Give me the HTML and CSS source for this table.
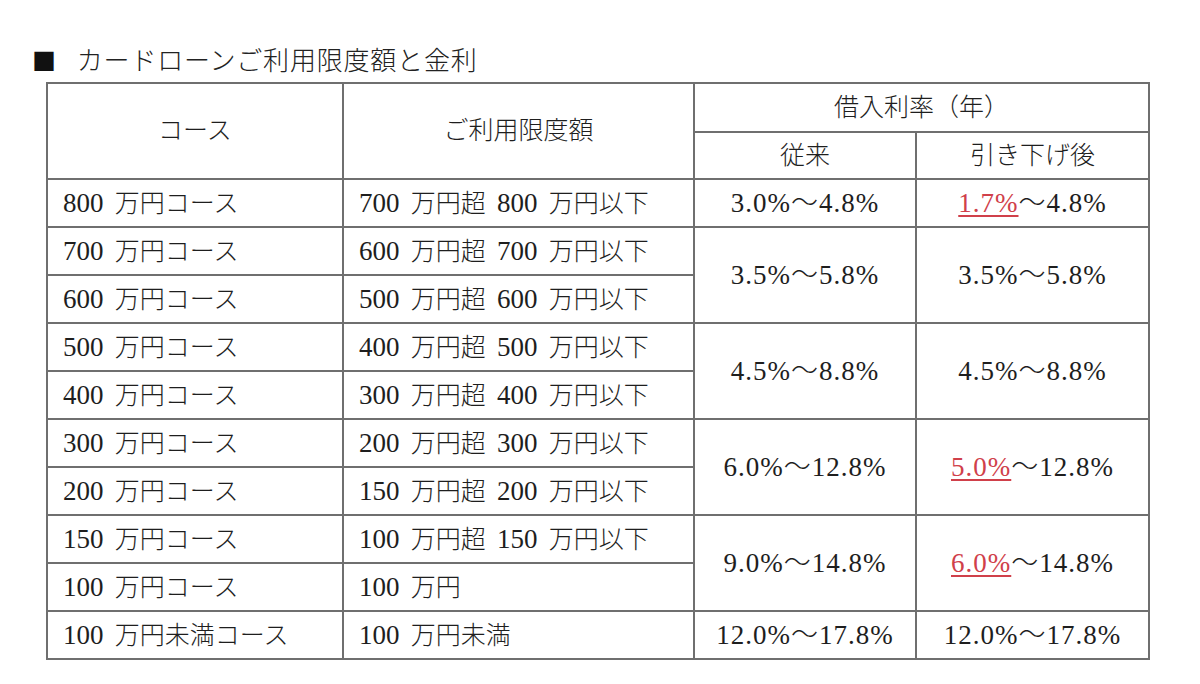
FILE: index.html
```html
<!DOCTYPE html>
<html lang="ja">
<head>
<meta charset="utf-8">
<link rel="stylesheet" href="styles.css">
</head>
<body>
<div class="page">
  <h1 class="title"><span class="mark">■</span>カードローンご利用限度額と金利</h1>
  <table class="rates">
    <colgroup>
      <col class="c1"><col class="c2"><col class="c3"><col class="c4">
    </colgroup>
    <thead>
      <tr class="h1">
        <th rowspan="2">コース</th>
        <th rowspan="2" class="top">ご利用限度額</th>
        <th colspan="2">借入利率（年）</th>
      </tr>
      <tr class="h2">
        <th>従来</th>
        <th>引き下げ後</th>
      </tr>
    </thead>
    <tbody>
      <tr>
        <td><span class="n">800</span> 万円コース</td><td><span class="n">700</span> 万円超 <span class="n">800</span> 万円以下</td>
        <td class="rate"><span class="r">3.0%～4.8%</span></td><td class="rate"><span class="r"><span class="new">1.7%</span>～4.8%</span></td>
      </tr>
      <tr>
        <td><span class="n">700</span> 万円コース</td><td><span class="n">600</span> 万円超 <span class="n">700</span> 万円以下</td>
        <td class="rate" rowspan="2"><span class="r">3.5%～5.8%</span></td><td class="rate" rowspan="2"><span class="r">3.5%～5.8%</span></td>
      </tr>
      <tr>
        <td><span class="n">600</span> 万円コース</td><td><span class="n">500</span> 万円超 <span class="n">600</span> 万円以下</td>
      </tr>
      <tr>
        <td><span class="n">500</span> 万円コース</td><td><span class="n">400</span> 万円超 <span class="n">500</span> 万円以下</td>
        <td class="rate" rowspan="2"><span class="r">4.5%～8.8%</span></td><td class="rate" rowspan="2"><span class="r">4.5%～8.8%</span></td>
      </tr>
      <tr>
        <td><span class="n">400</span> 万円コース</td><td><span class="n">300</span> 万円超 <span class="n">400</span> 万円以下</td>
      </tr>
      <tr>
        <td><span class="n">300</span> 万円コース</td><td><span class="n">200</span> 万円超 <span class="n">300</span> 万円以下</td>
        <td class="rate" rowspan="2"><span class="r">6.0%～12.8%</span></td><td class="rate" rowspan="2"><span class="r"><span class="new">5.0%</span>～12.8%</span></td>
      </tr>
      <tr>
        <td><span class="n">200</span> 万円コース</td><td><span class="n">150</span> 万円超 <span class="n">200</span> 万円以下</td>
      </tr>
      <tr>
        <td><span class="n">150</span> 万円コース</td><td><span class="n">100</span> 万円超 <span class="n">150</span> 万円以下</td>
        <td class="rate" rowspan="2"><span class="r">9.0%～14.8%</span></td><td class="rate" rowspan="2"><span class="r"><span class="new">6.0%</span>～14.8%</span></td>
      </tr>
      <tr>
        <td><span class="n">100</span> 万円コース</td><td><span class="n">100</span> 万円</td>
      </tr>
      <tr>
        <td><span class="n">100</span> 万円未満コース</td><td><span class="n">100</span> 万円未満</td>
        <td class="rate"><span class="r">12.0%～17.8%</span></td><td class="rate"><span class="r">12.0%～17.8%</span></td>
      </tr>
    </tbody>
  </table>
</div>
</body>
</html>
```

FILE: styles.css
```css
html, body {
  margin: 0;
  padding: 0;
  background: #ffffff;
}

body {
  font-family: "Liberation Serif", "Noto Sans CJK JP", serif;
  color: #1e1e1e;
}

.page {
  width: 1200px;
  height: 684px;
  padding: 43px 0 0 32px;
  box-sizing: border-box;
}

.title {
  margin: 0;
  font-size: 26px;
  font-weight: 300;
  line-height: 32px;
  height: 39px;
  color: #222;
  letter-spacing: 0.8px;
  font-family: "Noto Sans CJK JP", sans-serif;
}

.mark {
  display: inline-block;
  margin-right: 20px;
  font-size: 24px;
  color: #111;
}

.rates {
  margin-left: 14px;
  border-collapse: collapse;
  width: 1102px;
  table-layout: fixed;
  font-size: 25px;
  font-weight: 300;
  word-spacing: 5px;
}

.c1 { width: 296px; }
.c2 { width: 351px; }
.c3 { width: 222px; }
.c4 { width: 233px; }

.rates th,
.rates td {
  border: 2px solid #6f6f6f;
  padding: 0;
  line-height: 30px;
}

.rates th {
  font-weight: 300;
  text-align: center;
  vertical-align: middle;
}

.rates th.top {
  vertical-align: top;
  padding-top: 32px;
}

.h1 th { height: 47px; }
.h2 th { height: 45px; }

.rates td {
  height: 46px;
  padding-left: 15px;
  text-align: left;
  vertical-align: middle;
}

.n {
  font-size: 27px;
}

.rates td.rate {
  padding-left: 0;
  text-align: center;
  word-spacing: 0;
}

.r {
  font-size: 27px;
  letter-spacing: 1px;
}

.new {
  color: #d0404a;
  text-decoration: underline;
  text-decoration-color: #d0404a;
  text-underline-offset: 3px;
  text-decoration-thickness: 1.5px;
}
```
